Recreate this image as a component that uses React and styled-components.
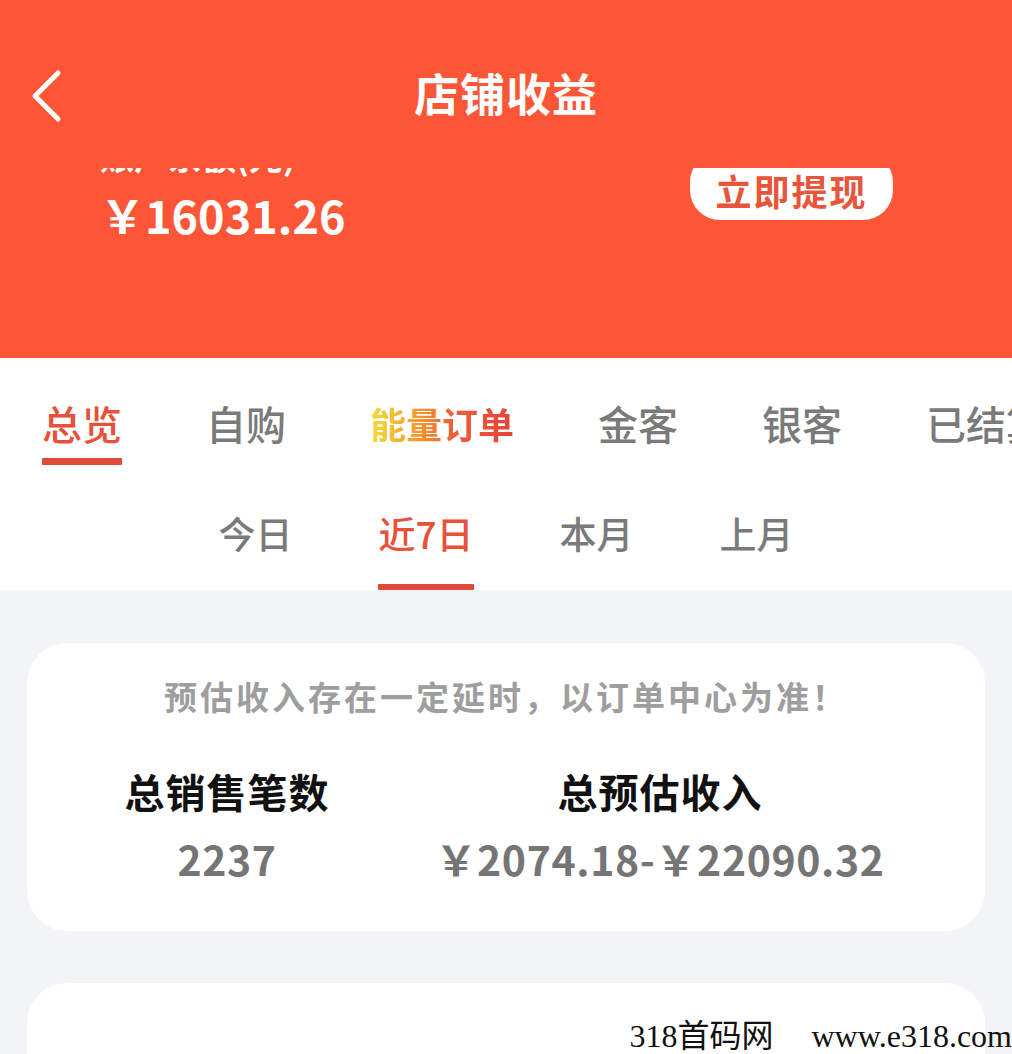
import React, { useState } from "react";
import styled, { createGlobalStyle } from "styled-components";

const GlobalStyle = createGlobalStyle`
  * { box-sizing: border-box; }
  body {
    margin: 0;
    background: #f3f4f6;
    font-family: "Noto Sans CJK SC", "Noto Sans", sans-serif;
  }
`;

const Page = styled.div`
  position: relative;
  height: 100vh;
  overflow: hidden;
  background: #f3f4f6;
`;

const Header = styled.div`
  position: relative;
  height: 358px;
  background: #fd5636;
`;

const NavBar = styled.div`
  position: absolute;
  top: 0;
  left: 0;
  right: 0;
  height: 168px;
  z-index: 2;
  background: #fd5636;
  display: grid;
  grid-template-columns: 1fr auto 1fr;
  align-items: start;
  padding-top: 69px;
`;

const BackButton = styled.div`
  padding-left: 30px;
  display: flex;
  align-items: center;
`;

const Title = styled.div`
  margin-top: 1px;
  font-size: 45px;
  line-height: 45px;
  font-weight: 700;
  color: #fff;
  letter-spacing: 1px;
`;

const Balance = styled.div`
  display: flex;
  justify-content: space-between;
  align-items: flex-start;
  padding: 139px 119px 0 100px;
`;

const BalanceInfo = styled.div`
  display: flex;
  flex-direction: column;
`;

const BalanceLabel = styled.div`
  font-size: 34px;
  line-height: 34px;
  font-weight: 700;
  color: #fff;
`;

const BalanceAmount = styled.div`
  margin-top: 19px;
  font-size: 45px;
  line-height: 45px;
  font-weight: 700;
  color: #fff;
  white-space: nowrap;
`;

const WithdrawButton = styled.div`
  margin-top: 13px;
  width: 203px;
  height: 68px;
  padding-top: 8px;
  border-radius: 30px;
  background: #fff;
  color: #e8553a;
  font-size: 36px;
  font-weight: 700;
  letter-spacing: 2px;
  display: flex;
  align-items: center;
  justify-content: center;
`;

const TabPanel = styled.div`
  background: #fff;
`;

const MainTabs = styled.div`
  display: flex;
  gap: 84px;
  padding: 45px 0 0 42px;
  white-space: nowrap;
`;

const SubTabs = styled.div`
  display: flex;
  justify-content: center;
  gap: 86px;
  margin-top: 50px;
`;

const TabItem = styled.div`
  display: flex;
  flex-direction: column;
  align-items: stretch;
  flex-shrink: 0;
  cursor: pointer;
`;

const TabText = styled.span`
  font-size: ${(p) => p.$size}px;
  line-height: ${(p) => p.$size}px;
  font-weight: 500;
  color: ${(p) => (p.$active ? "#e8503a" : "#7a7a7a")};
  ${(p) =>
    p.$gradient &&
    `
    font-size: 36px;
    font-weight: 700;
    background: linear-gradient(90deg, #f2dc3a 0%, #f6a02c 30%, #ef5d34 58%, #e5433a 100%);
    -webkit-background-clip: text;
    background-clip: text;
    color: transparent;
  `}
`;

const Underline = styled.div`
  margin-top: ${(p) => p.$gap}px;
  height: ${(p) => p.$h}px;
  background: ${(p) => (p.$active ? "#e04a3a" : "transparent")};
  border-radius: 1px;
`;

const Content = styled.div`
  padding: 53px 27px 0;
  display: flex;
  flex-direction: column;
  gap: 52px;
`;

const Card = styled.div`
  background: #fff;
  border-radius: 40px;
  min-height: ${(p) => p.$minHeight || 0}px;
`;

const SummaryCard = styled(Card)`
  padding: 35px 92px 52px 0;
`;

const Notice = styled.div`
  padding-left: 92px;
  text-align: center;
  font-size: 33px;
  line-height: 36px;
  font-weight: 700;
  letter-spacing: 3px;
  color: #9e9e9e;
`;

const Stats = styled.div`
  display: grid;
  grid-template-columns: 400px 1fr;
  margin-top: 56px;
`;

const Stat = styled.div`
  display: flex;
  flex-direction: column;
  align-items: center;
`;

const StatTitle = styled.div`
  font-size: 40px;
  line-height: 42px;
  font-weight: 700;
  color: #111;
  letter-spacing: 1px;
`;

const StatValue = styled.div`
  margin-top: 26px;
  font-size: 41px;
  line-height: 41px;
  font-weight: 700;
  color: #757575;
  letter-spacing: 0.6px;
  white-space: nowrap;
`;

const Watermark = styled.div`
  position: absolute;
  right: 0;
  bottom: 0;
  display: flex;
  gap: 38px;
  font-family: "Liberation Serif", "Noto Sans CJK SC", serif;
  font-size: 32px;
  line-height: 36px;
  font-weight: 400;
  color: #111;
`;

const mainTabs = ["总览", "自购", "能量订单", "金客", "银客", "已结算"];
const subTabs = ["今日", "近7日", "本月", "上月"];

const App = () => {
  const [mainTab, setMainTab] = useState(0);
  const [subTab, setSubTab] = useState(1);

  return (
    <Page>
      <GlobalStyle />
      <Header>
        <NavBar>
          <BackButton>
            <svg width="34" height="54" viewBox="0 0 34 54">
              <polyline
                points="28,4 5,27 28,50"
                fill="none"
                stroke="#fff"
                strokeWidth="5"
                strokeLinecap="round"
                strokeLinejoin="round"
              />
            </svg>
          </BackButton>
          <Title>店铺收益</Title>
          <div />
        </NavBar>
        <Balance>
          <BalanceInfo>
            <BalanceLabel>账户余额(元)</BalanceLabel>
            <BalanceAmount>￥16031.26</BalanceAmount>
          </BalanceInfo>
          <WithdrawButton>立即提现</WithdrawButton>
        </Balance>
      </Header>

      <TabPanel>
        <MainTabs>
          {mainTabs.map((t, i) => (
            <TabItem key={t} onClick={() => setMainTab(i)}>
              <TabText $size={40} $active={mainTab === i} $gradient={t === "能量订单"}>
                {t}
              </TabText>
              <Underline $gap={15} $h={7} $active={mainTab === i} />
            </TabItem>
          ))}
        </MainTabs>
        <SubTabs>
          {subTabs.map((t, i) => (
            <TabItem key={t} onClick={() => setSubTab(i)}>
              <TabText $size={37} $active={subTab === i}>
                {t}
              </TabText>
              <Underline $gap={32} $h={6} $active={subTab === i} />
            </TabItem>
          ))}
        </SubTabs>
      </TabPanel>

      <Content>
        <SummaryCard>
          <Notice>预估收入存在一定延时，以订单中心为准！</Notice>
          <Stats>
            <Stat>
              <StatTitle>总销售笔数</StatTitle>
              <StatValue>2237</StatValue>
            </Stat>
            <Stat>
              <StatTitle>总预估收入</StatTitle>
              <StatValue>￥2074.18-￥22090.32</StatValue>
            </Stat>
          </Stats>
        </SummaryCard>
        <Card $minHeight={200} />
      </Content>

      <Watermark>
        <span>318首码网</span>
        <span>www.e318.com</span>
      </Watermark>
    </Page>
  );
};

export default App;
